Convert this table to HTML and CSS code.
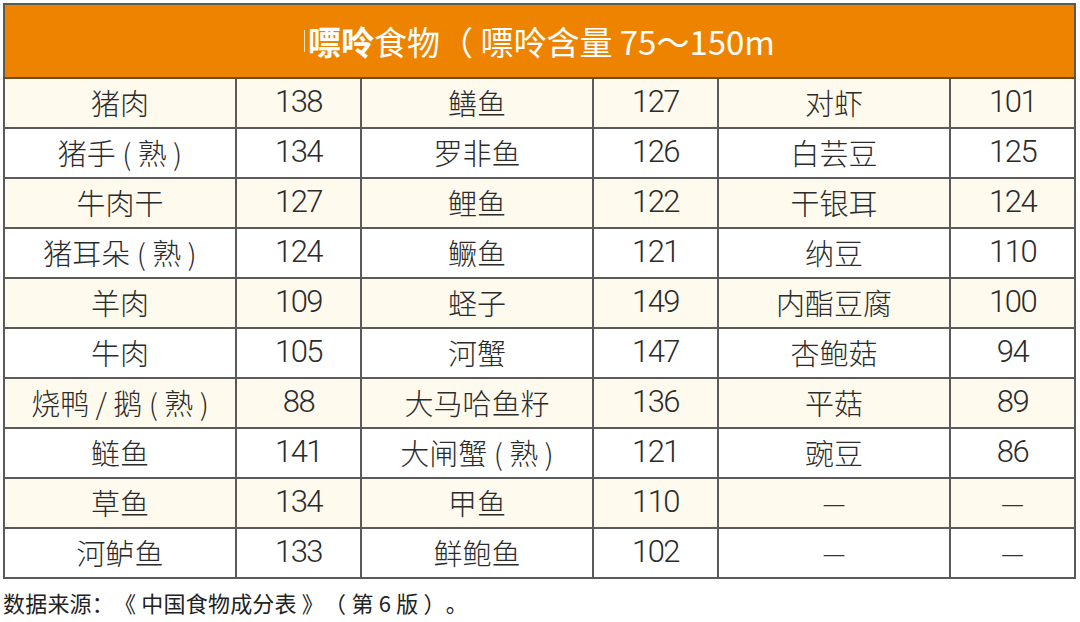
FILE: index.html
```html
<!DOCTYPE html>
<html lang="zh">
<head>
<meta charset="utf-8">
<link rel="stylesheet" href="styles.css">
</head>
<body>
<div class="page">
  <table class="purine">
    <colgroup>
      <col class="c-name"><col class="c-val"><col class="c-name"><col class="c-val"><col class="c-name"><col class="c-val">
    </colgroup>
    <thead>
      <tr><th colspan="6" class="head"><span class="title"><span class="tick"></span><b>嘌呤</b>食物（ 嘌呤含量 75～150m</span></th></tr>
    </thead>
    <tbody>
      <tr class="alt"><td>猪肉</td><td class="num">138</td><td>鳝鱼</td><td class="num">127</td><td>对虾</td><td class="num">101</td></tr>
      <tr><td>猪手 ( 熟 )</td><td class="num">134</td><td>罗非鱼</td><td class="num">126</td><td>白芸豆</td><td class="num">125</td></tr>
      <tr class="alt"><td>牛肉干</td><td class="num">127</td><td>鲤鱼</td><td class="num">122</td><td>干银耳</td><td class="num">124</td></tr>
      <tr><td>猪耳朵 ( 熟 )</td><td class="num">124</td><td>鳜鱼</td><td class="num">121</td><td>纳豆</td><td class="num">110</td></tr>
      <tr class="alt"><td>羊肉</td><td class="num">109</td><td>蛏子</td><td class="num">149</td><td>内酯豆腐</td><td class="num">100</td></tr>
      <tr><td>牛肉</td><td class="num">105</td><td>河蟹</td><td class="num">147</td><td>杏鲍菇</td><td class="num">94</td></tr>
      <tr class="alt"><td>烧鸭 / 鹅 ( 熟 )</td><td class="num">88</td><td>大马哈鱼籽</td><td class="num">136</td><td>平菇</td><td class="num">89</td></tr>
      <tr><td>鲢鱼</td><td class="num">141</td><td>大闸蟹 ( 熟 )</td><td class="num">121</td><td>豌豆</td><td class="num">86</td></tr>
      <tr class="alt"><td>草鱼</td><td class="num">134</td><td>甲鱼</td><td class="num">110</td><td class="dash">—</td><td class="dash">—</td></tr>
      <tr><td>河鲈鱼</td><td class="num">133</td><td>鲜鲍鱼</td><td class="num">102</td><td class="dash">—</td><td class="dash">—</td></tr>
    </tbody>
  </table>
  <p class="source">数据来源：《 中国食物成分表 》（ 第 6 版 ）。</p>
</div>
</body>
</html>
```

FILE: styles.css
```css
html, body {
  margin: 0;
  padding: 0;
  background: #ffffff;
}
.page {
  padding: 3px 0 0 3px;
  font-family: "Noto Sans CJK SC", "Noto Sans", sans-serif;
  color: #2b2b2b;
}
.purine {
  border-collapse: collapse;
  table-layout: fixed;
  width: 1073px;
  border: 2px solid #5a5a5a;
}
.c-name { width: 232px; }
.c-val { width: 125px; }
.head {
  height: 66px;
  padding: 0 0 6px 299px;
  background: #ee8300;
  color: #ffffff;
  text-align: left;
  font-weight: 400;
  font-size: 33px;
  line-height: 40px;
  border: 2px solid #5a5a5a;
  border-bottom: 2px solid #6e4a1c;
}
.title {
  display: inline-block;
  position: relative;
  white-space: nowrap;
  vertical-align: middle;
  line-height: 40px;
  padding-left: 4px;
}
.title b { font-weight: 700; }
.tick {
  position: absolute;
  left: 0;
  top: 9px;
  width: 1px;
  height: 22px;
  background: #fbe2c0;
}
td {
  height: 46px;
  padding: 0 0 2px;
  border: 2px solid #5a5a5a;
  text-align: center;
  font-size: 29px;
  font-weight: 300;
  line-height: 36px;
  white-space: nowrap;
}
tr.alt td { background: #fefaee; }
.num {
  font-family: "Roboto", "Liberation Sans", sans-serif;
  font-weight: 300;
  font-size: 31px;
  letter-spacing: -1.5px;
}
.dash {
  font-size: 26px;
  color: #333;
}
.source {
  margin: 9px 0 0 0;
  font-size: 22px;
  line-height: 28px;
  color: #222;
  letter-spacing: 0.2px;
  white-space: pre;
  text-spacing-trim: space-all;
}
```
